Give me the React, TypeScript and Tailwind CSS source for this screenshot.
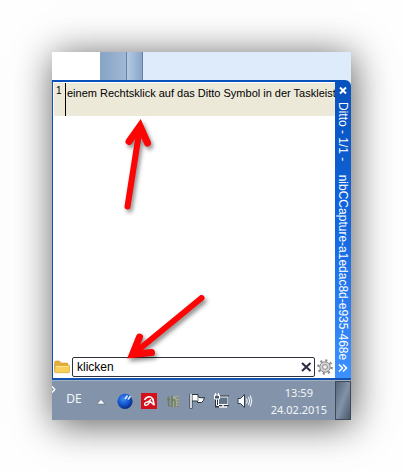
import { useState } from "react";

// Red pointer arrow lying over the clip list
function Arrow({ className, viewBox, shaft, head }: { className: string; viewBox: string; shaft: string; head: string }) {
  return (
    <svg className={className} viewBox={viewBox} fill="none" stroke="#fb0505" strokeLinecap="round" strokeLinejoin="miter" aria-hidden="true">
      <path d={shaft} strokeWidth="6" />
      <path d={head} strokeWidth="7" />
    </svg>
  );
}

function FolderIcon() {
  return (
    <svg className="h-4 w-4" viewBox="0 0 16 16" aria-hidden="true">
      <path d="M.5 3.5 Q.5 2 2 2 H5.5 L7 4 H13 Q14 4 14 5 V12 H.5Z" fill="#e6ae35" stroke="#cf9830" strokeWidth=".6" />
      <path d="M1.2 6.5 H15.5 V13 Q15.3 13.7 14.6 13.7 H1.5 Q.6 13.7 .6 12.8Z" fill="#f8cf58" stroke="#d8a63d" strokeWidth=".7" />
      <path d="M2 7.5 H14.8" stroke="#fde694" />
    </svg>
  );
}

function GearIcon() {
  return (
    <svg className="h-4 w-4" viewBox="0 0 16 16" aria-hidden="true">
      <circle cx="8" cy="8" r="6.6" fill="none" stroke="#8c8c8c" strokeWidth="2.4" strokeDasharray="2.2 2.98" />
      <circle cx="8" cy="8" r="5.2" fill="#d4d4d4" stroke="#8f8f8f" strokeWidth="1" />
      <circle cx="8" cy="8" r="2.4" fill="#f2f2f2" stroke="#8a8a8a" strokeWidth="1" />
    </svg>
  );
}

function DittoIcon() {
  return (
    <svg className="h-4 w-4" viewBox="0 0 16 16" aria-hidden="true">
      <defs>
        <radialGradient id="ball" cx=".4" cy=".35" r=".65">
          <stop offset="0" stopColor="#438df2" />
          <stop offset=".55" stopColor="#1558d0" />
          <stop offset="1" stopColor="#0a2a87" />
        </radialGradient>
      </defs>
      <circle cx="8" cy="8.3" r="7.6" fill="url(#ball)" />
      <path d="M8 6 L10.5 2.5 M11 6.5 L13.5 3" stroke="#d9eaff" strokeWidth="1.7" />
    </svg>
  );
}

function AntivirIcon() {
  return (
    <svg className="h-4 w-4" viewBox="0 0 16 16" aria-hidden="true">
      <rect width="16" height="16" fill="#d4101b" />
      <path d="M3.5 6.8 C5.5 3.2 9.5 2.8 11.5 5.6 C12.8 7.4 12.2 10 13.3 12.3" fill="none" stroke="#fff" strokeWidth="1.7" />
      <path d="M10 6.2 C8.5 9 6.5 9 5 9.4 C3 10 3.2 12.7 5.2 12.4 C7 12.1 8.3 9.8 9.2 8.4 L12.5 11.5" fill="none" stroke="#fff" strokeWidth="1.4" />
    </svg>
  );
}

function MonitorIcon() {
  return (
    <svg className="h-4 w-4" viewBox="0 0 16 16" aria-hidden="true">
      <path d="M3.5 5 V13 H13" fill="none" stroke="#28323f" strokeWidth="3" />
      <rect x="5" y="3.5" width="10.5" height="8.5" fill="#56687c" stroke="#28323f" strokeWidth="2" />
      <rect x="5.5" y="4" width="9.5" height="7.5" fill="#61758a" stroke="#fff" />
      <path d="M6 14 H14 M10 11.5 V14" stroke="#fff" strokeWidth="1.4" />
      <path d="M1.5 2 H6.5 V6 H1.5Z" fill="#4b5a69" stroke="#fff" />
      <path d="M2.5 0 V3 M5.5 0 V3 M3.5 6 V12.5 H6" fill="none" stroke="#fff" />
    </svg>
  );
}

function Taskbar() {
  return (
    <footer className="flex h-10 items-stretch border-t border-[#a2b0c0] bg-[#8394aa] text-[#f3f6fa]">
      <svg className="mt-1 h-3 w-1" viewBox="0 0 4 12" fill="none" stroke="#fff" strokeWidth="1.4" aria-hidden="true">
        <path d="M0 1.5 L2.8 4.5 L0 7.5" />
      </svg>
      <button className="mb-1 ml-2 w-5 text-center font-['Noto_Sans',sans-serif] text-xs">DE</button>
      <div className="ml-[13px] flex flex-1 items-center gap-2">
        <button aria-label="Ausgeblendete Symbole einblenden" className="mr-1">
          <svg className="h-4 w-2" viewBox="0 0 8 16" aria-hidden="true">
            <path d="M0 11 L4 6.5 L8 11Z" fill="#fff" stroke="#536170" strokeWidth=".5" />
          </svg>
        </button>
        <button aria-label="Ditto"><DittoIcon /></button>
        <button aria-label="Antivir"><AntivirIcon /></button>
        <button aria-label="th">
          <svg className="h-4 w-4" viewBox="0 0 16 16" aria-hidden="true">
            <path d="M8 3 H14 V14 H8Z" fill="#a3a996" />
            <path d="M3.5 3.5 V11.5 Q3.5 13 5 13 M2 6.5 H5 M7 2.5 V14 M7 8 Q10 5.3 10 8.5 V14" fill="none" stroke="#6b7d55" strokeWidth="1.4" />
            <path d="M11 5 H14 M12 8 H14 M12 11 H14 M11.5 13.5 H14" stroke="#747f70" />
          </svg>
        </button>
        <button aria-label="Wartungscenter">
          <svg className="h-4 w-4" viewBox="0 0 16 16" aria-hidden="true">
            <path d="M2 1 V15.5" stroke="#28323f" strokeWidth="3" />
            <path d="M3 1.5 H9 V4 Q12 5.5 15.5 4.5 Q14.5 8.5 12.5 9.5 H8.5 V8 H3Z" fill="#fff" stroke="#28323f" strokeWidth="1" />
            <path d="M2 1 V15" stroke="#fff" strokeWidth="1.6" />
            <path d="M9 4 V8" stroke="#7a8795" />
          </svg>
        </button>
        <button aria-label="Netzwerk"><MonitorIcon /></button>
        <button aria-label="Lautstärke">
          <svg className="h-4 w-4" viewBox="0 0 16 16" aria-hidden="true">
            <path d="M1 5.5 H3.5 L7.5 1.5 V14.5 L3.5 10.5 H1Z" fill="#fff" stroke="#334050" strokeWidth="1" />
            <path d="M9.5 5.5 Q11 8 9.5 10.5 M11.5 4 Q14 8 11.5 12 M13.3 2.5 Q16.3 8 13.3 13.5" fill="none" stroke="#fff" />
          </svg>
        </button>
      </div>
      <time className="mr-2 flex flex-col items-center justify-center font-['Noto_Sans',sans-serif] text-[11px] leading-[17px]">
        <span>13:59</span>
        <span>24.02.2015</span>
      </time>
      <button aria-label="Desktop anzeigen" className="w-4 border border-[#3e4a58] bg-linear-to-br from-[#56677b] via-[#8293a7] to-[#49596c]" />
    </footer>
  );
}

export default function App() {
  const [query, setQuery] = useState("klicken");

  return (
    <main className="flex min-h-screen bg-[#fefefe] p-[52px] font-['Liberation_Sans',Arial,sans-serif] text-black">
      <div className="flex min-w-0 flex-1 flex-col bg-[#deebfb] shadow-[2px_4px_36px_rgba(0,0,0,0.65)]">
        {/* Window edges behind the clipboard window */}
        <div className="flex h-7">
          <div className="w-12 bg-white" />
          <div className="w-[26px] bg-linear-to-r from-[#86a4c5] to-[#a0b8d4]" />
          <div className="w-[17px] border-x border-[#6681a3] bg-linear-to-r from-[#b4cae3] to-[#89a6c9]" />
        </div>

        <section className="relative flex min-h-0 flex-1 rounded-tr-md border-b-2 border-[#1254b0] bg-[#0751bc] pt-0.5 pl-px">
          <div className="flex min-w-0 flex-1 flex-col border-t border-l border-white bg-white">
            <ul>
              <li className="flex h-[33px] bg-[#ece9d8] text-[11px] leading-4 whitespace-nowrap">
                <span className="w-3 shrink-0 border-r border-black pl-0.5 text-[10px]">1</span>
                <span className="pt-0.5 pl-px">einem Rechtsklick auf das Ditto Symbol in der Taskleist</span>
              </li>
            </ul>
            <div className="flex-1" />
            <div className="flex items-center gap-0.5 pb-px">
              <button aria-label="Gruppen"><FolderIcon /></button>
              <div className="flex h-5 min-w-0 flex-1 items-center rounded-xs border border-[#30303c] pr-0.5 pl-1">
                <input
                  aria-label="Suche"
                  className="min-w-0 flex-1 bg-transparent text-xs outline-none"
                  value={query}
                  onChange={(e) => setQuery(e.target.value)}
                />
                <button aria-label="Suche löschen" onClick={() => setQuery("")}>
                  <svg className="h-3 w-3" viewBox="0 0 12 12" stroke="#292b43" strokeWidth="2" aria-hidden="true">
                    <path d="M2 2 L10.5 10 M10.5 2 L2 10" />
                  </svg>
                </button>
              </div>
              <button aria-label="Einstellungen" className="pr-0.5"><GearIcon /></button>
            </div>
          </div>

          <header className="flex w-4 flex-col items-center rounded-tr-md bg-linear-to-b from-[#0751bc] via-[#1267df] to-[#3d91ff] text-white">
            <button aria-label="Schließen" className="pt-0.5">
              <svg className="h-3 w-3" viewBox="0 0 12 12" stroke="#fff" strokeWidth="2" aria-hidden="true">
                <path d="M3 3.5 L9 9.5 M9 3.5 L3 9.5" />
              </svg>
            </button>
            <h1 className="flex-1 pt-1.5 text-xs leading-4 whitespace-pre [writing-mode:vertical-rl]">{"Ditto - 1/1 -    nibCCapture-a1edac8d-e935-468e"}</h1>
            <button aria-label="Erweitern" className="pb-1">
              <svg className="h-3 w-3" viewBox="0 0 12 12" fill="none" stroke="#fff" strokeWidth="1.5" aria-hidden="true">
                <path d="M2 2.5 L5.5 6 L2 9.5 M6 2.5 L9.5 6 L6 9.5" />
              </svg>
            </button>
          </header>

          <Arrow
            className="absolute top-[37px] left-[68px] h-[102px] w-[40px] drop-shadow-[2px_3px_2px_rgba(0,0,0,0.45)]"
            viewBox="120 117 40 102"
            shaft="M127.5 206.5 L139.5 130"
            head="M129 141.5 L140 126 L147.5 143"
          />
          <Arrow
            className="absolute top-[208px] left-[68px] h-[80px] w-[92px] drop-shadow-[2px_3px_2px_rgba(0,0,0,0.45)]"
            viewBox="120 288 92 80"
            shaft="M201.5 298 L137 351"
            head="M139.5 337 L132.5 354.5 L151.5 352.5"
          />
        </section>
        <Taskbar />
      </div>
    </main>
  );
}
